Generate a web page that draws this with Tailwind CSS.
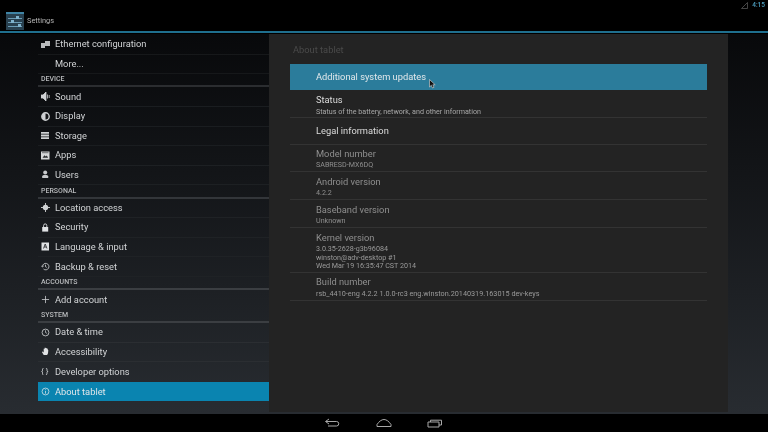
<!DOCTYPE html>
<html lang="en">
<head>
    <meta charset="UTF-8">
    <title>Settings</title>
    <script src="https://cdn.jsdelivr.net/npm/@tailwindcss/browser@4"></script>
</head>
<body class="bg-black">
<div class="relative w-[768px] h-[432px] overflow-hidden flex flex-col bg-black font-['Roboto',sans-serif] blur-[0.45px]">

    <!-- status bar -->
    <div class="h-[10px] flex items-center justify-end pr-[3px] gap-[4px]">
        <svg width="7" height="7" viewBox="0 0 7 7"><path d="M0.5 6.5L6.5 0.5V6.5Z" fill="none" stroke="#555" stroke-width="0.8"/></svg>
        <span class="text-[6.5px] font-medium text-[#4d9fc0] leading-none">4:15</span>
    </div>

    <!-- action bar -->
    <div class="h-[21px] flex items-center pl-[6px] gap-[3px]">
        <div class="relative w-[18px] h-[18px] mt-[1px] bg-[#28404f] border-t-2 border-[#3f84a5] flex flex-col justify-center gap-[3px] px-[2px]">
            <div class="h-px bg-[#6a9cb6]"></div>
            <div class="h-px bg-[#6a9cb6]"></div>
            <div class="h-px bg-[#6a9cb6]"></div>
            <div class="absolute left-[10px] top-[1.5px] w-[3px] h-[3px] bg-[#7fb2cc]"></div>
            <div class="absolute left-[5px] top-[5.5px] w-[3px] h-[3px] bg-[#7fb2cc]"></div>
            <div class="absolute left-[12px] top-[9.5px] w-[3px] h-[3px] bg-[#7fb2cc]"></div>
        </div>
        <span class="text-[7.4px] text-[#b5b5b5]">Settings</span>
    </div>
    <div class="h-[2px] bg-[#1f6f8e]"></div>

    <!-- main -->
    <div class="h-[380px] mt-px flex pl-[38px] pr-[40px] bg-gradient-to-b from-[#08090b] to-[#282c31]">

        <!-- left list -->
        <div class="w-[231px] pt-[1px] text-[#d2d4d6] text-[9.3px]">
            <div class="h-[19.55px] flex items-center border-b border-[#16181a]">
                <svg class="ml-[3px] mr-[5px] shrink-0" width="9" height="9" viewBox="0 0 9 9"><path d="M0 3h4v5H0zM4 1h5v5H4z" fill="#b8babc"/></svg>
                <span>Ethernet configuration</span>
            </div>
            <div class="h-[19.55px] flex items-center border-b border-[#16181a] pl-[17px]">More...</div>
            <div class="h-[13.4px] flex items-end pl-[3px] pb-[2px] border-b-2 border-[#2b2d30] text-[7px] leading-none font-medium text-[#b8babc]">DEVICE</div>

            <div class="h-[19.55px] flex items-center border-b border-[#1a1d20]">
                <svg class="ml-[3px] mr-[5px] shrink-0" width="9" height="9" viewBox="0 0 9 9"><path d="M0 3h2l3-3v9L2 6H0zM6.500 2.500v4M8.200 3v3" fill="#d0d2d4" stroke="#d0d2d4" stroke-width="0.8"/></svg>
                <span>Sound</span>
            </div>
            <div class="h-[19.55px] flex items-center border-b border-[#1a1d20]">
                <svg class="ml-[3px] mr-[5px] shrink-0" width="9" height="9" viewBox="0 0 9 9"><circle cx="4.500" cy="4.500" r="3.700" fill="#121316" stroke="#d0d2d4" stroke-width="1.400"/><path d="M4.500 1a3.500 3.500 0 0 0 0 7Z" fill="#d0d2d4"/></svg>
                <span>Display</span>
            </div>
            <div class="h-[19.55px] flex items-center border-b border-[#1a1d20]">
                <svg class="ml-[3px] mr-[5px] shrink-0" width="9" height="9" viewBox="0 0 9 9"><path d="M0 1h8v1.800H0zM0 3.600h8v1.800H0zM0 6.200h8V8H0z" fill="#d0d2d4"/></svg>
                <span>Storage</span>
            </div>
            <div class="h-[19.55px] flex items-center border-b border-[#1d2023]">
                <svg class="ml-[3px] mr-[5px] shrink-0" width="9" height="9" viewBox="0 0 9 9"><path d="M0 0.500h8.500v8H0z" fill="#d6d8da"/><path d="M1.500 6.800l2-2.500 1.300 1.200 1-1 1.300 2.300z" fill="#2a2c2f"/><path d="M1 1.700h6.500" stroke="#2a2c2f" stroke-width="0.6"/></svg>
                <span>Apps</span>
            </div>
            <div class="h-[19.55px] flex items-center border-b border-[#1d2023]">
                <svg class="ml-[3px] mr-[5px] shrink-0" width="9" height="9" viewBox="0 0 9 9"><circle cx="4.200" cy="2.600" r="2" fill="#c8cacc"/><path d="M1.200 8V6.300C1.200 5.400 2.500 5 4.200 5s3 .4 3 1.300V8z" fill="#c8cacc"/></svg>
                <span>Users</span>
            </div>
            <div class="h-[13.4px] flex items-end pl-[3px] pb-[2px] border-b-2 border-[#33363a] text-[7px] leading-none font-medium text-[#b8babc]">PERSONAL</div>

            <div class="h-[19.55px] flex items-center border-b border-[#1f2225]">
                <svg class="ml-[3px] mr-[5px] shrink-0" width="9" height="9" viewBox="0 0 10 10"><circle cx="5" cy="5" r="3" fill="#d0d2d4"/><path d="M5 0v10M0 5h10" stroke="#d0d2d4" stroke-width="1"/></svg>
                <span>Location access</span>
            </div>
            <div class="h-[19.55px] flex items-center border-b border-[#1f2225]">
                <svg class="ml-[3px] mr-[5px] shrink-0" width="9" height="9" viewBox="0 0 9 9"><path d="M1.200 4h6v4.600h-6z" fill="#e0e2e4"/><path d="M2.600 4V2.500a1.600 1.600 0 0 1 3.200 0V4" fill="none" stroke="#e0e2e4" stroke-width="0.9"/></svg>
                <span>Security</span>
            </div>
            <div class="h-[19.55px] flex items-center border-b border-[#1f2225]">
                <svg class="ml-[3px] mr-[5px] shrink-0" width="9" height="9" viewBox="0 0 9 9"><path d="M0.500 0.500h7.500v8H0.500z" fill="#e0e2e4"/><path d="M2.500 6.500L4.200 2l1.800 4.500M3.200 5h2" fill="none" stroke="#1e2023" stroke-width="0.8"/></svg>
                <span>Language &amp; input</span>
            </div>
            <div class="h-[19.55px] flex items-center border-b border-[#1f2225]">
                <svg class="ml-[3px] mr-[5px] shrink-0" width="9" height="9" viewBox="0 0 10 10"><path d="M1.600 5a3.600 3.600 0 1 1 1.200 2.800M0.400 4.200L1.600 5.600 3 4.400M5 3v2.200l1.400.8" fill="none" stroke="#d0d2d4" stroke-width="0.9"/></svg>
                <span>Backup &amp; reset</span>
            </div>
            <div class="h-[13.4px] flex items-end pl-[3px] pb-[2px] border-b-2 border-[#3b3e42] text-[7px] leading-none font-medium text-[#b8babc]">ACCOUNTS</div>

            <div class="h-[19.55px] flex items-center">
                <svg class="ml-[3px] mr-[5px] shrink-0" width="9" height="9" viewBox="0 0 10 10"><path d="M5 1v8M1 5h8" stroke="#c8cacc" stroke-width="0.9"/></svg>
                <span>Add account</span>
            </div>
            <div class="h-[13.4px] flex items-end pl-[3px] pb-[2px] border-b-2 border-[#3b3e42] text-[7px] leading-none font-medium text-[#b8babc]">SYSTEM</div>

            <div class="h-[19.55px] flex items-center border-b border-[#2b2e32]">
                <svg class="ml-[3px] mr-[5px] shrink-0" width="9" height="9" viewBox="0 0 10 10"><circle cx="5" cy="5" r="3.800" fill="none" stroke="#d0d2d4" stroke-width="0.9"/><path d="M5 2.600V5l1.700 1" fill="none" stroke="#d0d2d4" stroke-width="0.8"/></svg>
                <span>Date &amp; time</span>
            </div>
            <div class="h-[19.55px] flex items-center border-b border-[#2b2e32]">
                <svg class="ml-[3px] mr-[5px] shrink-0" width="9" height="9" viewBox="0 0 10 10"><path d="M3 9L1 5.500 2 5l1 1V2l1 0 .3-1.500L5.400 1l.6.3.9.2.5 1 .7 1-.3 3.500L6.800 9z" fill="#e0e2e4"/></svg>
                <span>Accessibility</span>
            </div>
            <div class="h-[19.55px] flex items-center">
                <span class="w-[17px] pl-[3px] text-[8px] leading-none whitespace-pre">{ }</span>
                <span>Developer options</span>
            </div>
            <div class="h-[19.55px] flex items-center bg-[#0a84b0] text-[#dfe6ea]">
                <svg class="ml-[3px] mr-[5px] shrink-0" width="9" height="9" viewBox="0 0 10 10"><circle cx="5" cy="5" r="3.800" fill="none" stroke="#cfe0e8" stroke-width="0.9"/><path d="M5 2.600v.9M5 4.400V7.400" stroke="#cfe0e8" stroke-width="0.9"/></svg>
                <span>About tablet</span>
            </div>
        </div>

        <!-- right panel -->
        <div class="w-[459px] h-[378px] bg-[#232323] pl-[21px] pr-[21px]">
            <div class="h-[30px] pl-[3px] pt-[10px] text-[9.3px] leading-[12px] text-[#4a4a4a]">About tablet</div>
            <div class="h-[26px] flex items-center pl-[26px] bg-[#2b7c9b] text-[9.3px] text-[#e2e8eb]">Additional system updates</div>

            <div class="h-[27.5px] pl-[26px] pt-[4px] border-b border-[#333]">
                <div class="text-[9.3px] leading-[12px] text-[#dcdcdc]">Status</div>
                <div class="text-[7.15px] leading-[10px] mt-[1px] text-[#a8a8a8]">Status of the battery, network, and other information</div>
            </div>
            <div class="h-[27px] flex items-center pl-[26px] pt-[1px] border-b border-[#333] text-[9.3px] text-[#dcdcdc]">Legal information</div>
            <div class="h-[27.5px] pl-[26px] pt-[3px] border-b border-[#333]">
                <div class="text-[9.3px] leading-[12px] text-[#8f8f8f]">Model number</div>
                <div class="text-[7.15px] leading-[10px] text-[#8f8f8f]">SABRESD-MX6DQ</div>
            </div>
            <div class="h-[28px] pl-[26px] pt-[4px] border-b border-[#333]">
                <div class="text-[9.3px] leading-[12px] text-[#8f8f8f]">Android version</div>
                <div class="text-[7.15px] leading-[10px] text-[#8f8f8f]">4.2.2</div>
            </div>
            <div class="h-[28px] pl-[26px] pt-[4px] border-b border-[#333]">
                <div class="text-[9.3px] leading-[12px] text-[#8f8f8f]">Baseband version</div>
                <div class="text-[7.15px] leading-[10px] text-[#8f8f8f]">Unknown</div>
            </div>
            <div class="h-[45px] pl-[26px] pt-[4px] border-b border-[#333]">
                <div class="text-[9.3px] leading-[12px] text-[#8f8f8f]">Kernel version</div>
                <div class="text-[7.15px] leading-[8.5px] mt-[1px] text-[#9a9a9a]">3.0.35-2628-g3b96084<br>winston@adv-desktop #1<br>Wed Mar 19 16:35:47 CST 2014</div>
            </div>
            <div class="h-[28px] pl-[26px] pt-[3px] border-b border-[#333]">
                <div class="text-[9.3px] leading-[12px] text-[#8f8f8f]">Build number</div>
                <div class="text-[7.25px] leading-[10px] mt-[1px] text-[#9a9a9a]">rsb_4410-eng 4.2.2 1.0.0-rc3 eng.winston.20140319.163015 dev-keys</div>
            </div>
        </div>
    </div>

    <!-- nav bar -->
    <div class="flex-1 flex items-center justify-center gap-[35.5px] pr-px bg-black">
        <svg width="16" height="10" viewBox="0 0 16 10"><path d="M5 1L1.500 3.500 5 6M2 3.500h10.500a1.800 1.800 0 0 1 0 4.500H4" fill="none" stroke="#a8a8a8" stroke-width="1"/></svg>
        <svg width="16" height="10" viewBox="0 0 16 10"><path d="M1 8.500V6.500C3 3.500 5.500 1.500 8 1.500s5 2 7 5v2z" fill="none" stroke="#a8a8a8" stroke-width="1"/></svg>
        <svg width="16" height="10" viewBox="0 0 16 10"><path d="M1 4h11v5H1zM3.500 4V2.200h11V7H12" fill="none" stroke="#a8a8a8" stroke-width="1"/></svg>
    </div>

    <!-- mouse cursor -->
    <svg class="absolute left-[429px] top-[79px]" width="7" height="10" viewBox="0 0 7 10"><path d="M0.500 0.500V8L2.300 6.300 3.500 9 5 8.300 3.800 5.800H6.200Z" fill="#111" stroke="#ddd" stroke-width="0.6"/></svg>
</div>
</body>
</html>
